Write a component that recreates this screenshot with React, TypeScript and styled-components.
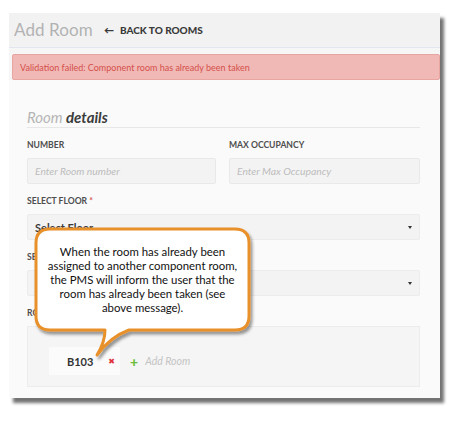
import React from "react";
import styled, { createGlobalStyle } from "styled-components";

const Global = createGlobalStyle`
  html, body { margin: 0; padding: 0; background: #ffffff; }
  body { width: 463px; height: 424px; overflow: hidden; font-family: Lato, "Noto Sans", sans-serif; }
  * { box-sizing: border-box; }
`;

const Stage = styled.div`
  position: relative;
  width: 463px;
  height: 424px;
  padding: 13px 0 0 9px;
`;

const Panel = styled.div`
  width: 431px;
  height: 385px;
  background: #fafafa;
  box-shadow: 4px 5px 3px rgba(0, 0, 0, 0.55);
  display: flex;
  flex-direction: column;
`;

const Header = styled.div`
  height: 35px;
  background: #f2f2f2;
  border-bottom: 1px solid #e3e6ee;
  display: flex;
  align-items: center;
  gap: 11px;
  padding: 0 0 2px 5px;
`;

const Title = styled.h1`
  margin: 0;
  font-family: Lato, sans-serif;
  font-weight: 400;
  font-size: 17px;
  color: #b2b2b2;
  letter-spacing: 0.1px;
`;

const BackLink = styled.a`
  display: flex;
  align-items: center;
  gap: 6px;
  font-family: Lato, sans-serif;
  font-weight: 900;
  font-size: 10px;
  color: #3a3a3a;
  text-transform: uppercase;
  text-decoration: none;
  padding-top: 2px;
`;

const BannerWrap = styled.div`
  background: #f6f6f6;
  padding: 6px 0 0 3px;
`;

const Banner = styled.div`
  height: 26px;
  background: #f0b9b6;
  border: 1px solid #e9a5a1;
  border-radius: 2px;
  color: #d4504a;
  font-family: Lato, sans-serif;
  font-size: 9px;
  display: flex;
  align-items: center;
  padding-left: 7px;
`;

const Content = styled.div`
  flex: 1;
  padding: 27px 20px 0 18px;
  display: flex;
  flex-direction: column;
  gap: 11px;
`;

const SectionTitle = styled.h2`
  margin: 0;
  height: 21px;
  border-bottom: 1px solid #e7e7e7;
  font-family: Lato, sans-serif;
  font-style: italic;
  font-size: 15px;
  font-weight: 700;
  color: #3c3c3c;
  line-height: 20px;
  span { font-weight: 400; color: #b5b5b5; }
`;

const Row = styled.div`
  display: grid;
  grid-template-columns: 189px 191px;
  justify-content: space-between;
`;

const Field = styled.div`
  display: flex;
  flex-direction: column;
  gap: 7px;
`;

const Label = styled.label`
  height: 12px;
  line-height: 12px;
  font-family: Lato, sans-serif;
  font-weight: 700;
  font-size: 8.6px;
  color: #4e4e4e;
  text-transform: uppercase;
  b { color: #d9534f; font-weight: 700; margin-left: 2px; }
`;

const Input = styled.div`
  height: 26px;
  background: #f3f3f3;
  border: 1px solid #e9e9e9;
  border-radius: 2px;
  display: flex;
  align-items: center;
  padding-left: 7px;
  font-family: Lato, sans-serif;
  font-style: italic;
  font-size: 10.3px;
  color: #bdbdbd;
`;

const Select = styled.div`
  height: 26px;
  background: #f3f3f3;
  border: 1px solid #ececec;
  border-radius: 2px;
  display: flex;
  align-items: center;
  justify-content: space-between;
  padding: 0 7px 0 7px;
  font-family: Lato, sans-serif;
  font-weight: 700;
  font-size: 11px;
  color: #3a3a3a;
`;

const Caret = styled.i`
  width: 0;
  height: 0;
  border-left: 2.5px solid transparent;
  border-right: 2.5px solid transparent;
  border-top: 3px solid #333;
`;

const RoomBox = styled.div`
  height: 61px;
  background: #f5f5f5;
  border: 1px solid #ececec;
  display: flex;
  align-items: flex-start;
  padding: 20px 0 0 21px;
  gap: 10px;
`;

const Chip = styled.div`
  width: 71px;
  height: 28px;
  background: #fbfbfb;
  display: flex;
  align-items: center;
  justify-content: space-between;
  padding: 0 5px 0 18px;
  font-family: Lato, sans-serif;
  font-weight: 700;
  font-size: 11px;
  color: #333;
`;

const Remove = styled.span`
  color: #e0323a;
  font-family: "DejaVu Sans", sans-serif;
  font-size: 8px;
  line-height: 1;
  padding-top: 1px;
`;

const AddRoom = styled.span`
  display: flex;
  align-items: center;
  gap: 7px;
  height: 28px;
  font-family: Lato, sans-serif;
  font-style: italic;
  font-size: 10.5px;
  color: #c4c4c4;
  b { color: #6cbf3c; font-style: normal; font-size: 14px; font-weight: 900; }
`;

const Callout = styled.div`
  position: absolute;
  left: 30px;
  top: 224px;
  width: 232px;
  height: 140px;
`;

const CalloutText = styled.p`
  position: absolute;
  left: 6px;
  top: 6px;
  width: 213px;
  height: 99px;
  margin: 0;
  display: flex;
  align-items: center;
  justify-content: center;
  text-align: center;
  font-family: Lato, sans-serif;
  font-size: 11.4px;
  line-height: 14px;
  color: #111;
`;

function Bubble() {
  return (
    <svg width="232" height="140" viewBox="0 0 232 140" style={{ position: "absolute", left: 0, top: 0 }}>
      <defs>
        <filter id="sh" x="-10%" y="-10%" width="130%" height="130%">
          <feDropShadow dx="2" dy="3" stdDeviation="1.6" floodColor="#000" floodOpacity="0.4" />
        </filter>
      </defs>
      <path
        d="M 20 5 H 205 Q 219 5 219 19 V 92 Q 219 106 205 106 H 99 Q 80 113 67 131 Q 75 118 75 106 H 20 Q 6 106 6 92 V 19 Q 6 5 20 5 Z"
        fill="#ffffff"
        stroke="#e8912c"
        strokeWidth="3"
        strokeLinejoin="round"
        filter="url(#sh)"
      />
    </svg>
  );
}

export default function App() {
  return (
    <>
      <Global />
      <Stage>
        <Panel>
          <Header>
            <Title>Add Room</Title>
            <BackLink href="#">
              <span>←</span>
              Back to Rooms
            </BackLink>
          </Header>
          <BannerWrap>
            <Banner>Validation failed: Component room has already been taken</Banner>
          </BannerWrap>
          <Content>
            <SectionTitle>
              <span>Room</span> details
            </SectionTitle>
            <Row>
              <Field>
                <Label>Number</Label>
                <Input>Enter Room number</Input>
              </Field>
              <Field>
                <Label>Max Occupancy</Label>
                <Input>Enter Max Occupancy</Input>
              </Field>
            </Row>
            <Field>
              <Label>
                Select Floor<b>*</b>
              </Label>
              <Select>
                Select Floor
                <Caret />
              </Select>
            </Field>
            <Field>
              <Label>Select Type</Label>
              <Select>
                Individual
                <Caret />
              </Select>
            </Field>
            <Field>
              <Label>Rooms</Label>
              <RoomBox>
                <Chip>
                  B103
                  <Remove>✖</Remove>
                </Chip>
                <AddRoom>
                  <b>+</b>
                  Add Room
                </AddRoom>
              </RoomBox>
            </Field>
          </Content>
        </Panel>
        <Callout>
          <Bubble />
          <CalloutText>
            When the room has already been
            <br />
            assigned to another component room,
            <br />
            the PMS will inform the user that the
            <br />
            room has already been taken (see
            <br />
            above message).
          </CalloutText>
        </Callout>
      </Stage>
    </>
  );
}
